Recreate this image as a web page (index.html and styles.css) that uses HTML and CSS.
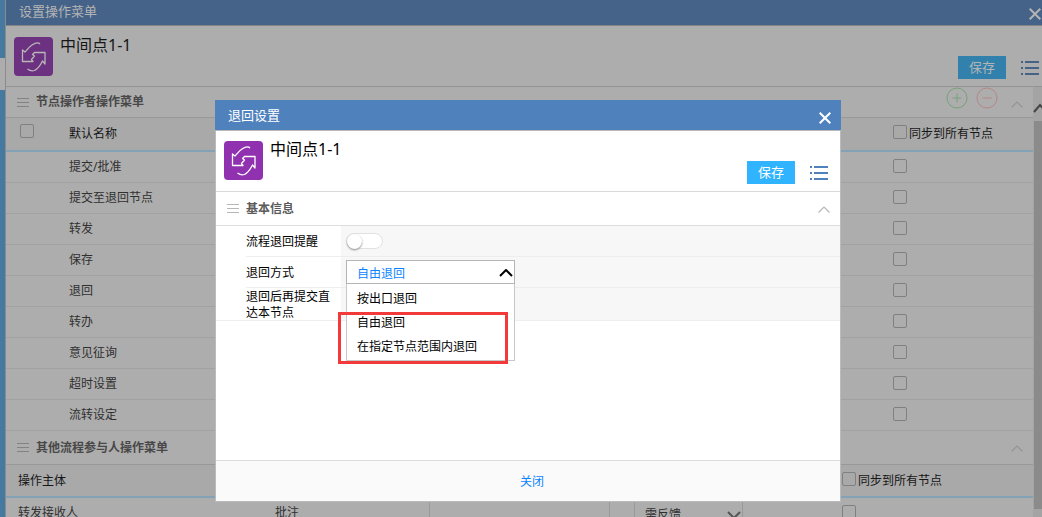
FILE: index.html
```html
<!DOCTYPE html>
<html lang="zh-CN">
<head>
<meta charset="utf-8">
<title>设置操作菜单</title>
<link rel="stylesheet" href="styles.css">
</head>
<body>
<svg class="defs" width="0" height="0" aria-hidden="true">
  <symbol id="flow" viewBox="0 0 39 39"><rect width="39" height="39" rx="4" fill="currentColor"/><path d="M26 7c-2-2-5-1-8 1-3 2-5 5-7 7l-2.500-2v11.500H19l-1.500-2 3-3.500-2-1.500 2-2H31V27l-2.500-3c-2 4-5 8-8 9.500-3 1-5 0-7-1.500" fill="none" stroke="var(--ink)" stroke-width="1.300" stroke-linejoin="round"/></symbol>
  <symbol id="bars" viewBox="0 0 12 9"><path d="M0 .5h12M0 4.500h12M0 8.500h12" stroke="currentColor"/></symbol>
  <symbol id="list" viewBox="0 0 18 14"><path d="M0 1h2M4 1h14M0 7h2M4 7h14M0 13h2M4 13h14" stroke="currentColor" stroke-width="2"/></symbol>
  <symbol id="cross" viewBox="0 0 12 12"><path d="M.7.7l10.600 10.600M11.300.7L.7 11.300" stroke="currentColor" stroke-width="2"/></symbol>
  <symbol id="up" viewBox="0 0 12 7"><path d="M.5 6.500L6 1l5.500 5.500" fill="none" stroke="currentColor" stroke-width="1.200"/></symbol>
</svg>
<div class="app">
  <div class="strip"></div>
  <div class="page">
    <header class="bar"><h1>设置操作菜单</h1><button aria-label="关闭窗口"><svg class="cross"><use href="#cross"/></svg></button></header>
    <div class="head">
      <svg class="logo"><use href="#flow"/></svg>
      <h2>中间点1-1</h2>
      <div class="tools"><button class="save">保存</button><button class="menu" aria-label="菜单"><svg class="list"><use href="#list"/></svg></button></div>
    </div>
    <div class="scroller">
      <main class="content">
        <div class="section first">
          <svg class="bars"><use href="#bars"/></svg><h3>节点操作者操作菜单</h3>
          <div class="actions">
            <button class="add" aria-label="添加"><svg width="22" height="22"><circle cx="11" cy="11" r="10"/><path d="M6.500 11h9M11 6.500v9"/></svg></button>
            <button class="remove" aria-label="删除"><svg width="22" height="22"><circle cx="11" cy="11" r="10"/><path d="M6.500 11h9"/></svg></button>
          </div>
          <button class="fold" aria-label="收起"><svg class="up"><use href="#up"/></svg></button>
        </div>
        <table class="grid">
          <colgroup><col class="c-check"><col><col class="c-sync"></colgroup>
          <thead><tr><th><input type="checkbox" aria-label="全选"></th><th>默认名称</th><th><label><input type="checkbox">同步到所有节点</label></th></tr></thead>
          <tbody>
            <tr><td></td><td>提交/批准</td><td><input type="checkbox" aria-label="同步提交/批准"></td></tr>
            <tr><td></td><td>提交至退回节点</td><td><input type="checkbox" aria-label="同步提交至退回节点"></td></tr>
            <tr><td></td><td>转发</td><td><input type="checkbox" aria-label="同步转发"></td></tr>
            <tr><td></td><td>保存</td><td><input type="checkbox" aria-label="同步保存"></td></tr>
            <tr><td></td><td>退回</td><td><input type="checkbox" aria-label="同步退回"></td></tr>
            <tr><td></td><td>转办</td><td><input type="checkbox" aria-label="同步转办"></td></tr>
            <tr><td></td><td>意见征询</td><td><input type="checkbox" aria-label="同步意见征询"></td></tr>
            <tr><td></td><td>超时设置</td><td><input type="checkbox" aria-label="同步超时设置"></td></tr>
            <tr><td></td><td>流转设定</td><td><input type="checkbox" aria-label="同步流转设定"></td></tr>
          </tbody>
        </table>
        <div class="section second">
          <svg class="bars"><use href="#bars"/></svg><h3>其他流程参与人操作菜单</h3>
          <button class="fold" aria-label="收起"><svg class="up"><use href="#up"/></svg></button>
        </div>
        <table class="grid others">
          <colgroup><col class="c-who"><col class="c-kind"><col><col class="c-gap"><col class="c-reply"><col class="c-space"><col class="c-all"></colgroup>
          <thead><tr><th colspan="6">操作主体</th><th><label><input type="checkbox">同步到所有节点</label></th></tr></thead>
          <tbody><tr><td>转发接收人</td><td class="line">批注</td><td class="line"></td><td class="line"></td><td class="line reply"><div><span>需反馈</span><svg class="down" viewBox="0 0 14 8"><path d="M1 1l6 6 6-6"/></svg></div></td><td></td><td><input type="checkbox" aria-label="同步转发接收人"></td></tr></tbody>
        </table>
      </main>
      <div class="track"><svg width="9" height="34"><path d="M1 25l6-7 6 7" fill="none" stroke="#444" stroke-width="2"/></svg><div class="thumb"></div></div>
    </div>
  </div>
</div>
<div class="overlay">
  <div class="dialog" role="dialog" aria-label="退回设置">
    <header class="bar"><h1>退回设置</h1><button aria-label="关闭对话框"><svg class="cross"><use href="#cross"/></svg></button></header>
    <div class="panel">
      <div class="head">
        <svg class="logo"><use href="#flow"/></svg>
        <h2>中间点1-1</h2>
        <div class="tools"><button class="save">保存</button><button class="menu" aria-label="菜单"><svg class="list"><use href="#list"/></svg></button></div>
      </div>
      <div class="section">
        <svg class="bars"><use href="#bars"/></svg><h3>基本信息</h3>
        <button class="fold" aria-label="收起"><svg class="up"><use href="#up"/></svg></button>
      </div>
      <div class="form">
        <div class="field"><label for="remind">流程退回提醒</label><div class="value"><input class="switch" type="checkbox" id="remind"></div></div>
        <div class="field"><label for="mode">退回方式</label><div class="value">
          <div class="combo">
            <select id="mode"><option>按出口退回</option><option selected>自由退回</option><option>在指定节点范围内退回</option></select>
            <svg class="caret" viewBox="0 0 14 8"><path d="M1 7l6-6 6 6"/></svg>
            <ul class="options"><li>按出口退回</li><li>自由退回</li><li>在指定节点范围内退回</li></ul>
            <div class="marker"></div>
          </div>
        </div></div>
        <div class="field last"><span>退回后再提交直达本节点</span><div class="value"></div></div>
      </div>
      <footer><button>关闭</button></footer>
    </div>
  </div>
</div>
</body>
</html>
```
FILE: styles.css
```css
* { box-sizing: border-box; }
html, body { height: 100%; }
body {
  margin: 0;
  overflow: hidden;
  background: #adadad;
  color: #161616;
  font: 12px/16px "Noto Sans", "Noto Sans CJK SC", sans-serif;
}
h1, h2, h3, ul { margin: 0; padding: 0; font-weight: 400; }
button { padding: 0; border: 0; background: none; color: inherit; font: inherit; }
svg { display: block; flex: none; }
.defs { position: absolute; }

.app { display: flex; height: 100%; overflow: hidden; }
.strip {
  width: 6px;
  border-right: 1px solid #8b8b8b;
  background: linear-gradient(#4679a0 58px, #adadad 58px, #adadad 90px, #4679a0 90px);
}
.page { flex: 1; display: flex; flex-direction: column; min-width: 0; }

.bar { display: flex; justify-content: space-between; align-items: center; height: 31px; padding: 0 10px 0 13px; background: #4f81bd; border-bottom: 1px solid #b8b8b8; color: #fff; }
.bar h1 { font-size: 13px; line-height: 20px; }
.bar button { padding-top: 6px; }
.page > .bar { flex: none; height: 26px; padding: 0 1px 4px 13px; background: #456388; border-color: #858585; color: #b4b4b4; }
.cross { width: 12px; height: 12px; }

.head { --ink: #fff; display: flex; flex: none; height: 61px; padding: 11px 12px 7px 8px; border-bottom: 1px solid #d9d9d9; }
.logo { width: 39px; height: 39px; color: #9031b0; }
.head h2 { flex: 1; padding-left: 7px; font-size: 16px; line-height: 16px; }
.tools { display: flex; align-items: flex-end; gap: 15px; }
.save { width: 48px; height: 23px; background: #30b4ff; color: #fff; font-size: 13px; line-height: 23px; }
.menu { height: 23px; color: #4f81bd; }
.list { width: 18px; height: 14px; }
.page .head { --ink: #b8b8b8; padding-right: 3px; border-color: #939393; }
.page .logo { color: #6c3180; }
.page .save { background: #3181ac; color: #b4b4b4; }
.page .menu { color: #456388; }
.dialog .head { padding-top: 10px; }

.scroller { flex: 1; display: flex; min-height: 0; }
.content { flex: 1; min-width: 0; overflow: hidden; }
.track { width: 9px; background: #a4a4a4; }
.thumb { width: 8px; height: calc(100% - 42px); margin-left: 1px; background: #8b8b8b; }
.section { display: flex; align-items: center; height: 34px; padding: 0 10px 0 11px; border-bottom: 1px solid #dedede; color: #b7b7b7; }
.section h3 { flex: 1; padding-left: 7px; color: #5b5b5b; font-size: 12px; font-weight: 700; }
.bars { width: 12px; height: 9px; }
.up { width: 12px; height: 7px; }
.page .section { border-color: #999; color: #828282; }
.page .section h3 { color: #484848; }
.page .first { height: 31px; }
.actions { display: flex; gap: 8px; margin-right: 13px; padding-bottom: 8px; }
.actions svg { fill: none; stroke: currentColor; }
.add { color: #75a279; }
.remove { color: #b48787; }
.fold { padding-top: 2px; }
.page .fold { color: #969696; }
.page .first .fold { padding-top: 4px; }

.grid { width: 100%; table-layout: fixed; border-spacing: 0; }
.grid th, .grid td { height: 31px; padding: 0; border-bottom: 1px solid #a1a1a1; text-align: left; vertical-align: middle; font-weight: 400; color: #303030; }
.grid th { height: 34px; border-bottom: 2px solid #84a2b5; background: #a9a9a9; color: #161616; }
.c-check { width: 63px; }
.c-sync { width: 140px; }
.grid th:first-child input { margin-left: 14px; }
.grid label { display: flex; align-items: center; gap: 2px; }
.grid input { display: block; width: 14px; height: 14px; margin: 0; appearance: none; border: 1px solid #808080; border-radius: 2px; }
.grid td input { margin-bottom: 2px; }
.grid label input { margin-bottom: 4px; }
.grid th:first-child input { margin-bottom: 6px; }
.others th { height: 33px; }
.others th:first-child, .others td:first-child { padding-left: 12px; }
.others .line { border-right: 1px solid #999; }
.c-who { width: 269px; }
.c-kind { width: 155px; }
.c-gap { width: 25px; }
.c-reply { width: 108px; }
.c-space { width: 99px; }
.c-all { width: 191px; }
.reply div { display: flex; align-items: center; justify-content: space-between; padding: 4px 1px 0 10px; }
.down, .caret { width: 14px; height: 8px; fill: none; stroke: #555; stroke-width: 2; }

.overlay { position: absolute; inset: 0; padding: 100px 201px 15px 215px; }
.dialog { display: flex; flex-direction: column; height: 100%; color: #000; }
.panel { flex: 1; display: flex; flex-direction: column; border: 1px solid #bbb; border-top: 0; background: #fff; }
.dialog .section { flex: none; }
.form { flex: 1; }
.field { display: flex; align-items: stretch; height: 31px; margin-left: 30px; border-bottom: 1px solid #eee; }
.field > label, .field > span { width: 95px; padding: 2px 9px 0 0; align-self: center; }
.field.last { height: 33px; margin-left: 0; padding-left: 30px; }
.value { flex: 1; display: flex; align-items: center; padding-left: 5px; background: #f7f7f7; }
.switch { position: relative; width: 37px; height: 16px; margin: 0; appearance: none; border: 1px solid #dfe3df; border-radius: 8px; background: #fff; }
.switch::before { content: ""; display: block; width: 15px; height: 15px; border-radius: 50%; background: #fff; box-shadow: 0 1px 2px #888; }
.combo { position: relative; width: 169px; height: 24px; }
.combo select { width: 100%; height: 24px; padding: 4px 10px 0; appearance: none; border: 1px solid #b5b5b5; border-radius: 0; background: #fff; color: #0a84ff; font: inherit; }
.caret { position: absolute; right: 2px; top: 9px; stroke: #000; }
.options { position: absolute; top: 24px; left: 0; right: 0; padding: 3px 0 1px; list-style: none; border: 1px solid #c8c8c8; border-top: 0; background: #fff; }
.options li { padding-left: 10px; line-height: 24px; }
.marker { position: absolute; left: -8px; top: 52px; width: 170px; height: 52px; border: 3px solid #f33a3a; }
footer { display: flex; align-items: center; justify-content: center; height: 41px; border-top: 1px solid #dcdcdc; background: #fafafa; }
footer button { padding: 2px 14px 0 22px; color: #0a84ff; }
```
